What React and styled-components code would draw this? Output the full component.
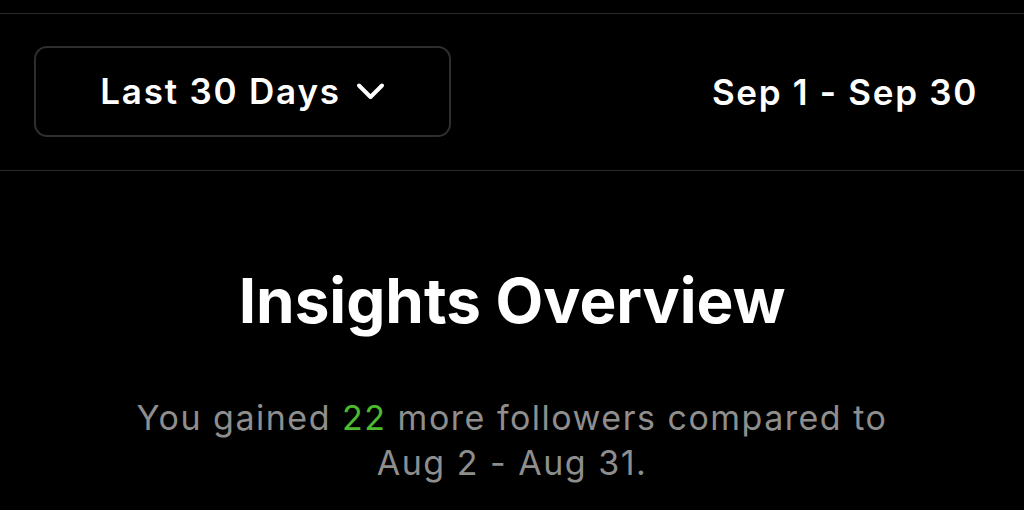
import React from "react";
import styled, { createGlobalStyle } from "styled-components";

const Global = createGlobalStyle`
  html, body { margin: 0; padding: 0; background: #000; }
  body { font-family: Inter, "Noto Sans", sans-serif; color: #fff; }
`;

const Page = styled.div`
  width: 1024px;
  height: 510px;
  background: #000;
  overflow: hidden;
  padding-top: 13px;
  box-sizing: border-box;
`;

const Toolbar = styled.div`
  display: flex;
  align-items: center;
  justify-content: space-between;
  border-top: 1px solid #2a2a2a;
  border-bottom: 1px solid #2a2a2a;
  padding: 32px 46px 33px 34px;
`;

const RangeButton = styled.button`
  width: 417px;
  height: 91px;
  box-sizing: border-box;
  background: #000;
  border: 2px solid #2e2e2e;
  border-radius: 13px;
  color: #fff;
  font-family: Inter, sans-serif;
  font-size: 35px;
  font-weight: 600;
  letter-spacing: 1.8px;
  display: flex;
  align-items: center;
  justify-content: center;
  gap: 15px;
  padding: 0 0 2px 0;
`;

const Chevron = styled.svg`
  display: block;
  flex: none;
  margin-top: 2px;
`;

const DateRange = styled.div`
  font-size: 35px;
  font-weight: 600;
  letter-spacing: 1.7px;
`;

const Content = styled.div`
  display: flex;
  flex-direction: column;
  align-items: center;
  padding-top: 95px;
`;

const Title = styled.h1`
  margin: 0;
  font-size: 62px;
  font-weight: 700;
  line-height: 70px;
  letter-spacing: 0;
`;

const Subtitle = styled.p`
  margin: 59px 0 0;
  width: 800px;
  text-align: center;
  color: #8e8e8e;
  font-size: 34px;
  font-weight: 400;
  letter-spacing: 1.5px;
  line-height: 45px;
`;

const Highlight = styled.span`
  color: #4cbb2f;
`;

export default function App() {
  return (
    <Page>
      <Global />
      <Toolbar>
        <RangeButton>
          Last 30 Days
          <Chevron width="29" height="19" viewBox="0 0 29 19" fill="none">
            <path d="M3 3.5l11.5 11.5L26 3.5" stroke="#fff" strokeWidth="4" strokeLinecap="round" strokeLinejoin="round" />
          </Chevron>
        </RangeButton>
        <DateRange>Sep 1 - Sep 30</DateRange>
      </Toolbar>
      <Content>
        <Title>Insights Overview</Title>
        <Subtitle>
          You gained <Highlight>22</Highlight> more followers compared to<br />Aug 2 - Aug 31.
        </Subtitle>
      </Content>
    </Page>
  );
}
